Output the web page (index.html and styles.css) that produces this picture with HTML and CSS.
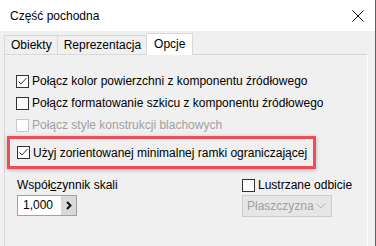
FILE: index.html
```html
<!DOCTYPE html>
<html lang="pl">
<head>
    <meta charset="UTF-8">
    <title>Część pochodna</title>
    <link rel="stylesheet" href="styles.css">
</head>
<body>
    <div class="dialog">
        <div class="titlebar">
            <span class="title">Część pochodna</span>
            <svg class="close" width="12" height="12" viewBox="0 0 12 12">
                <path d="M0.5 0.5 L11.5 11.5 M11.5 0.5 L0.5 11.5" stroke="#111" stroke-width="1" fill="none"/>
            </svg>
        </div>
        <div class="tabs">
            <div class="tab">Obiekty</div>
            <div class="tab">Reprezentacja</div>
            <div class="tab active">Opcje</div>
        </div>
        <div class="panel">
            <div class="options">
                <label class="opt">
                    <span class="box checked"><svg width="11" height="11" viewBox="0 0 11 11"><path d="M1.5 5.5 L4 8 L9.5 2" stroke="#333" stroke-width="1" fill="none"/></svg></span>
                    Połącz kolor powierzchni z komponentu źródłowego
                </label>
                <label class="opt">
                    <span class="box"></span>
                    Połącz formatowanie szkicu z komponentu źródłowego
                </label>
                <label class="opt disabled">
                    <span class="box"></span>
                    Połącz style konstrukcji blachowych
                </label>
                <div class="highlight">
                    <label class="opt">
                        <span class="box checked"><svg width="11" height="11" viewBox="0 0 11 11"><path d="M1.5 5.5 L4 8 L9.5 2" stroke="#333" stroke-width="1" fill="none"/></svg></span>
                        Użyj zorientowanej minimalnej ramki ograniczającej
                    </label>
                </div>
            </div>
            <div class="bottom">
                <div class="scale">
                    <div class="label">Współ<u>c</u>zynnik skali</div>
                    <div class="spin">
                        <span class="value">1,000</span>
                        <span class="arrow">
                            <svg width="8" height="9" viewBox="0 0 8 9"><path d="M2 1 L5.5 4.5 L2 8" stroke="#111" stroke-width="2" fill="none"/></svg>
                        </span>
                    </div>
                </div>
                <div class="mirror">
                    <label class="opt">
                        <span class="box"></span>
                        Lustrzane odbicie
                    </label>
                    <div class="select">
                        <span class="sel-text">Płaszczyzna :</span>
                        <svg width="10" height="6" viewBox="0 0 10 6"><path d="M0.5 0.5 L5 5 L9.5 0.5" stroke="#b8b8b8" stroke-width="1" fill="none"/></svg>
                    </div>
                </div>
            </div>
        </div>
    </div>
</body>
</html>
```

FILE: styles.css
```css
body {
    margin: 0;
    background: #f0f0f0;
    font-family: "Liberation Sans", Arial, sans-serif;
    font-size: 12px;
    color: #000;
}
.dialog {
    width: 375px;
    height: 246px;
    border-right: 1px solid #606060;
    overflow: hidden;
}
.titlebar {
    height: 31px;
    background: #fff;
    display: flex;
    align-items: center;
    justify-content: space-between;
    padding: 0 11px 0 10px;
}
.tabs {
    display: flex;
    align-items: flex-end;
    height: 22px;
    margin-top: 1px;
    padding-left: 4px;
}
.tab {
    height: 18px;
    line-height: 18px;
    padding: 0 5px 0 6px;
    border: 1px solid #d9d9d9;
    border-bottom: none;
    border-right: none;
    background: #f0f0f0;
}
.tab.active {
    height: 21px;
    line-height: 21px;
    padding: 0 7px;
    background: #fff;
    border-right: 1px solid #d9d9d9;
    margin-bottom: -1px;
    position: relative;
    z-index: 1;
}
.panel {
    margin: 0 7px 0 4px;
    height: 200px;
    border: 1px solid #d9d9d9;
    border-right-color: #fff;
    background: #f0f0f0;
}
.options {
    padding: 15px 0 0 2px;
    display: flex;
    flex-direction: column;
}
.opt {
    display: flex;
    align-items: center;
    gap: 3px;
    height: 22px;
    padding-left: 9px;
    white-space: nowrap;
}
.box {
    flex: none;
    width: 11px;
    height: 11px;
    border: 1px solid #333;
    background: #fff;
    display: flex;
    align-items: center;
    justify-content: center;
}
.opt.disabled { color: #a0a0a0; }
.opt.disabled .box { border-color: #c8c8c8; }
.highlight {
    width: 303px;
    height: 27px;
    border: 3px solid #ef4c55;
    display: flex;
    align-items: center;
    box-shadow: 0 1px 4px rgba(0,0,0,0.25);
}
.highlight .opt { padding-left: 7px; }
.bottom {
    display: flex;
    padding: 6px 0 0 12px;
}
.scale { width: 225px; }
.label { height: 20px; line-height: 20px; }
.spin {
    display: flex;
    width: 58px;
    height: 19px;
    border: 1px solid #a0a0a0;
    background: #fff;
}
.value {
    flex: 1;
    padding-left: 5px;
    line-height: 19px;
}
.arrow {
    width: 15px;
    background: #d9d9d9;
    display: flex;
    align-items: center;
    justify-content: center;
}
.mirror { width: 90px; }
.mirror .opt { padding-left: 0; height: 20px; }
.select {
    box-sizing: border-box;
    display: flex;
    align-items: center;
    justify-content: space-between;
    width: 90px;
    height: 22px;
    padding: 0 5px 0 4px;
    border: 1px solid #cccccc;
    background: #e6e6e6;
    color: #a0a0a0;
    white-space: nowrap;
}
.sel-text { overflow: hidden; width: 68px; }
```
